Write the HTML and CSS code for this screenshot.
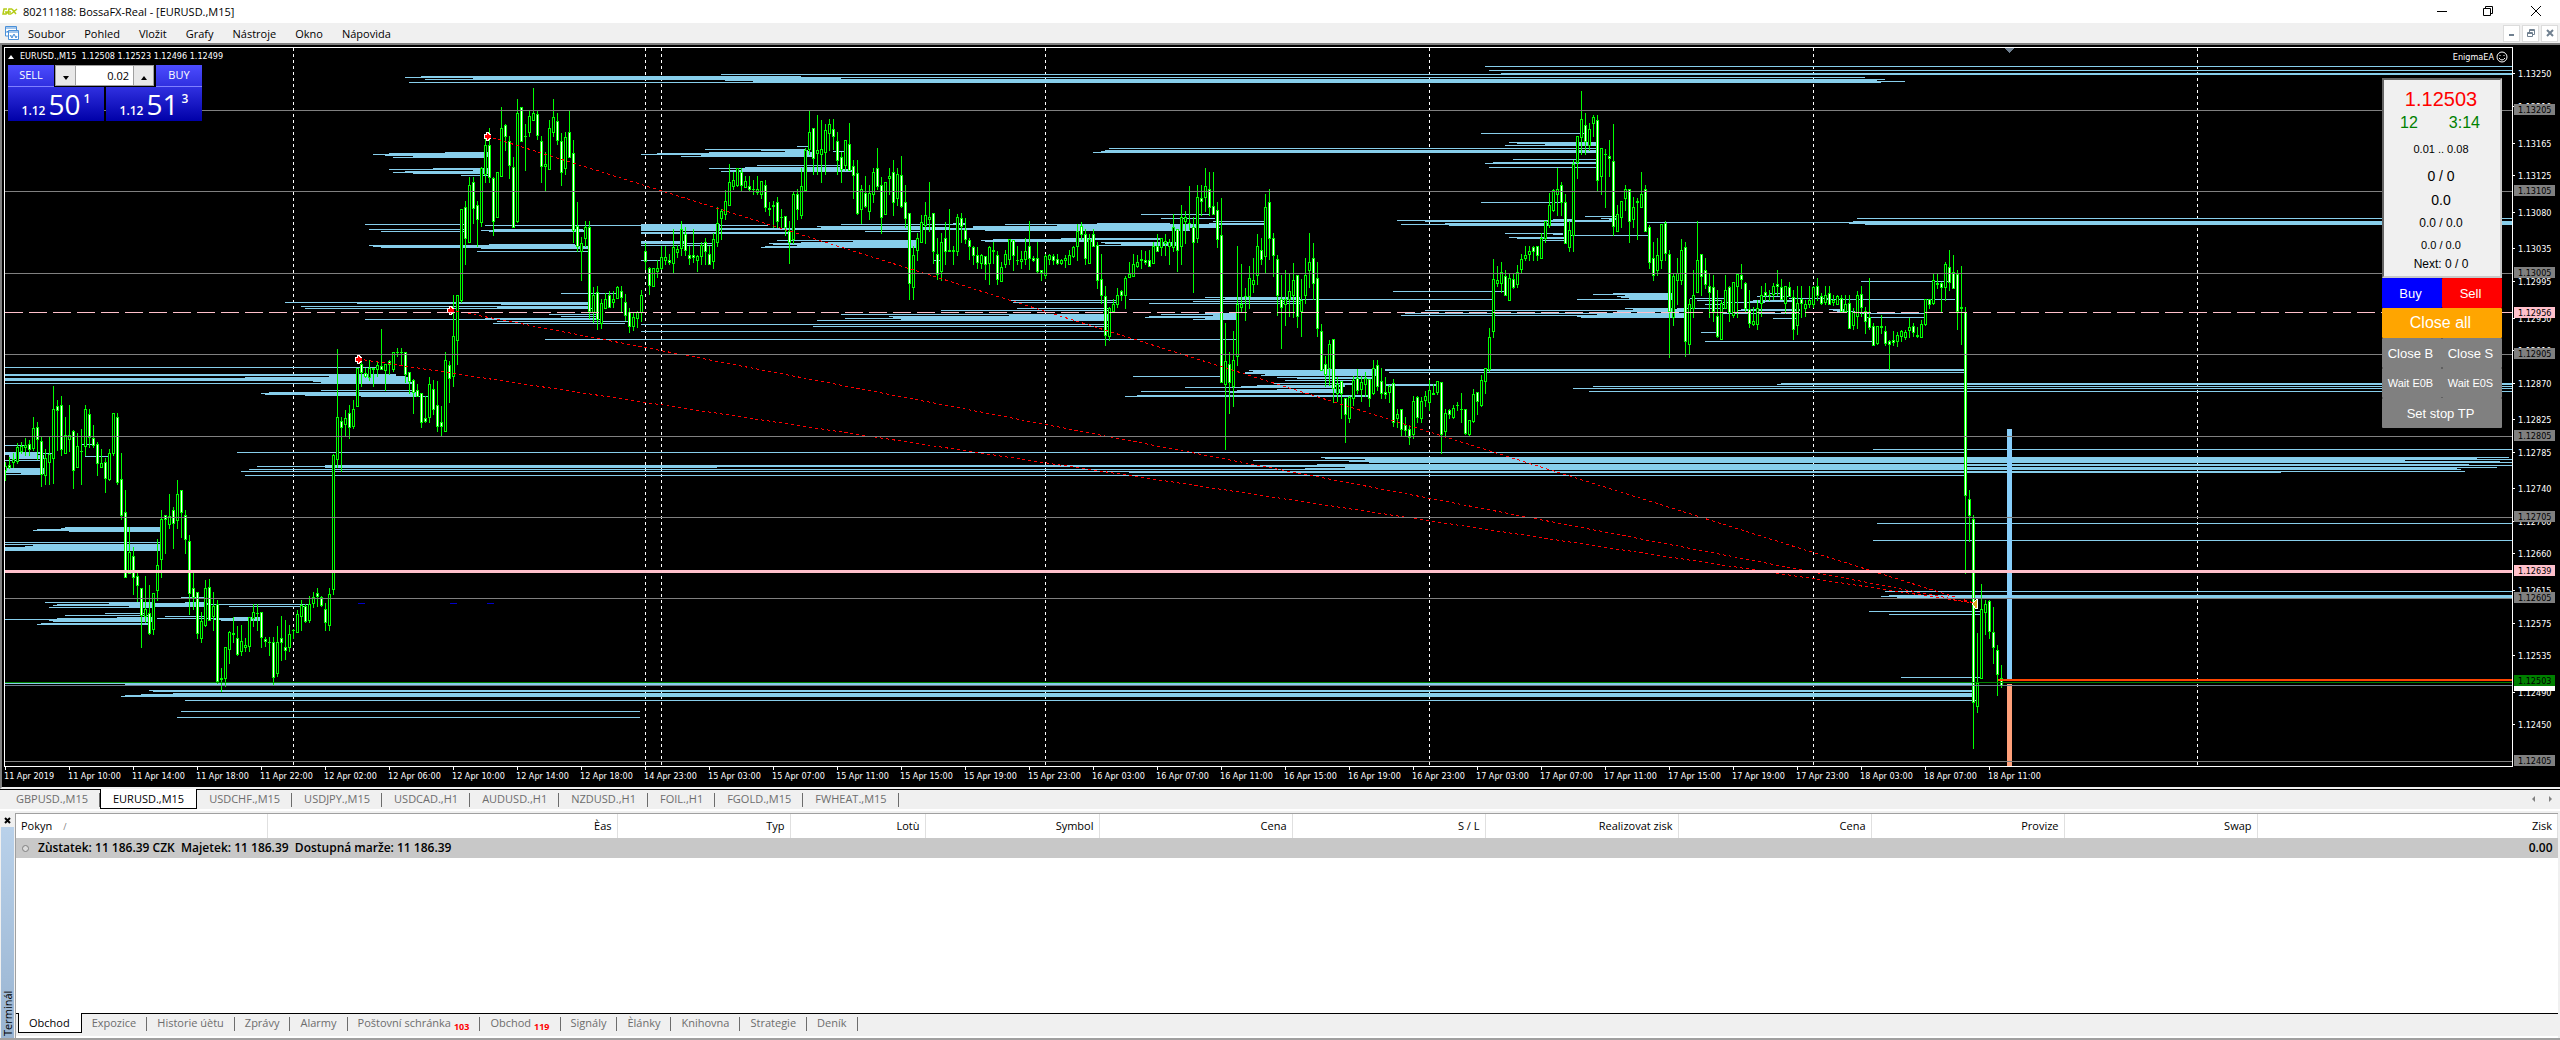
FILE: index.html
```
<!DOCTYPE html>
<html lang="cs">
  <head>
    <meta charset="UTF-8" />
    <meta name="viewport" content="width=device-width, initial-scale=1.0" />
    <title>80211188: BossaFX-Real - [EURUSD.,M15]</title>
    <link rel="stylesheet" href="styles.css">
  </head>
  <body>
    <header class="title-bar">
      <svg class="app-logo" width="16" height="10" viewBox="0 0 16 10">
        <path d="M5 2H2L1 7H4L5 5H3M6 7L7 2H10M7 5H9M6 7H9M10 2L14 7M15 2L9 7" fill="none" stroke="#b5cc18" stroke-width="1.5" />
      </svg>
      <h1>80211188: BossaFX-Real - [EURUSD.,M15]</h1>
      <div class="window-buttons">
        <button aria-label="Minimalizovat"><svg width="10" height="10"><path d="M0 5.5H10" /></svg></button>
        <button aria-label="Obnovit"><svg width="10" height="10"><path d="M0.5 2.5H7.5V9.5H0.5ZM2.5 2.5V0.5H9.5V7.5H7.5" /></svg></button>
        <button aria-label="Zavřít"><svg width="10" height="10"><path d="M0 0L10 10M10 0L0 10" /></svg></button>
      </div>
    </header>

    <nav class="menu-bar">
      <svg class="menu-logo" width="16" height="16" viewBox="0 0 16 16">
        <path d="M1.500 1.500H12.500V11H1.500ZM1 3H13M3 8V6L5 8L6 5" fill="#fff" stroke="#4a90d9" />
        <path d="M4.500 5.500H14.500V14.500H4.500ZM4 7H15M6 10L8 13L10 9L12 13L13 11" fill="#fff" stroke="#4a90d9" />
      </svg>
      <button>Soubor</button>
      <button>Pohled</button>
      <button>Vložit</button>
      <button>Grafy</button>
      <button>Nástroje</button>
      <button>Okno</button>
      <button>Nápovìda</button>
      <div class="mdi-buttons">
        <button aria-label="Minimalizovat graf"><svg width="8" height="8"><path d="M1 6H6" /></svg></button>
        <button aria-label="Obnovit graf"><svg class="thin" width="8" height="8"><path d="M0.500 3.500H5.500V7.500H0.500ZM2.500 3V0.500H7.500V5.500H6M0 4.500H5M3 1.500H7" /></svg></button>
        <button aria-label="Zavřít graf"><svg width="8" height="8"><path d="M1 1L7 7M7 1L1 7" /></svg></button>
      </div>
    </nav>

    <main class="chart-window">
      <svg id="chart" class="chart" width="100%" height="742" role="img" aria-label="EURUSD M15"></svg>

      <div class="chart-title"><i class="tri-up"></i>EURUSD.,M15&nbsp; 1.12508 1.12523 1.12496 1.12499</div>

      <div class="one-click">
        <button class="quote sell">
          <span class="side">SELL</span>
          <span class="price">1.12 <b>50</b><sup>1</sup></span>
        </button>
        <div class="lots">
          <button aria-label="Méně"><i class="tri-down"></i></button>
          <input type="text" value="0.02" aria-label="Objem" />
          <button aria-label="Více"><i class="tri-up"></i></button>
        </div>
        <button class="quote buy">
          <span class="side">BUY</span>
          <span class="price">1.12 <b>51</b><sup>3</sup></span>
        </button>
      </div>

      <div class="ea-name">EnigmaEA
        <svg width="12" height="12" viewBox="0 0 12 12"><circle cx="6" cy="6" r="5" /><path d="M4 4V5M8 4V5M3 7Q6 11 9 7" /></svg>
      </div>

      <div class="ea-panel">
        <div class="ea-info">
          <p class="rate">1.12503</p>
          <p class="timer"><span>12</span><span>3:14</span></p>
          <p class="range">0.01 .. 0.08</p>
          <p class="count">0 / 0</p>
          <p class="count">0.0</p>
          <p class="profit">0.0 / 0.0</p>
          <p class="small">0.0 / 0.0</p>
          <p class="next">Next: 0 / 0</p>
        </div>
        <button class="ea-buy">Buy</button>
        <button class="ea-sell">Sell</button>
        <button class="ea-all wide">Close all</button>
        <button>Close B</button>
        <button>Close S</button>
        <button class="ea-wait">Wait E0B</button>
        <button class="ea-wait">Wait E0S</button>
        <button class="wide">Set stop TP</button>
      </div>
    </main>

    <nav class="tabs chart-tabs">
      <button>GBPUSD.,M15</button>
      <button class="active">EURUSD.,M15</button>
      <button>USDCHF.,M15</button>
      <button>USDJPY.,M15</button>
      <button>USDCAD.,H1</button>
      <button>AUDUSD.,H1</button>
      <button>NZDUSD.,H1</button>
      <button>FOIL.,H1</button>
      <button>FGOLD.,M15</button>
      <button>FWHEAT.,M15</button>
      <div class="tab-scroll"><i class="tri-left"></i><i class="tri-right"></i></div>
    </nav>

    <section class="terminal">
      <div class="terminal-side">
        <button aria-label="Zavřít terminál"><svg width="7" height="7"><path d="M1 1L6 6M6 1L1 6" /></svg></button>
        <div class="terminal-label">Terminál</div>
      </div>
      <div class="terminal-body">
        <table class="orders">
          <colgroup>
            <col class="c-order" /><col class="c-time" /><col class="c-type" /><col class="c-lots" /><col class="c-symbol" />
            <col class="c-price" /><col class="c-price" /><col class="c-price" /><col class="c-price" /><col class="c-price" /><col class="c-price" />
            <col />
          </colgroup>
          <thead>
            <tr>
              <th>Pokyn <span class="sort">/</span></th>
              <th>Èas</th>
              <th>Typ</th>
              <th>Lotù</th>
              <th>Symbol</th>
              <th>Cena</th>
              <th>S / L</th>
              <th>Realizovat zisk</th>
              <th>Cena</th>
              <th>Provize</th>
              <th>Swap</th>
              <th>Zisk</th>
            </tr>
          </thead>
          <tbody>
            <tr>
              <td colspan="11"><i class="dot"></i>Zùstatek: 11 186.39 CZK&nbsp; Majetek: 11 186.39&nbsp; Dostupná marže: 11 186.39</td>
              <td>0.00</td>
            </tr>
          </tbody>
        </table>
        <nav class="tabs terminal-tabs">
          <button class="active">Obchod</button>
          <button>Expozice</button>
          <button>Historie úètu</button>
          <button>Zprávy</button>
          <button>Alarmy</button>
          <button>Poštovní schránka<small>103</small></button>
          <button>Obchod<small>119</small></button>
          <button>Signály</button>
          <button>Èlánky</button>
          <button>Knihovna</button>
          <button>Strategie</button>
          <button>Deník</button>
        </nav>
      </div>
    </section>

    <script src="chart.js"></script>
  </body>
</html>
```
FILE: styles.css
```
* {
  box-sizing: border-box;
}
body {
  margin: 0;
  min-height: 100vh;
  display: flex;
  flex-direction: column;
  background: #f0f0f0;
  font-family: "Open Sans", "Noto Sans", sans-serif;
  font-size: 11px;
  color: #000;
}
button {
  padding: 0;
  border: 0;
  background: none;
  font: inherit;
  color: inherit;
}
h1,
p {
  margin: 0;
  font-size: inherit;
  font-weight: normal;
}

/* window title and menu */
.title-bar {
  display: flex;
  align-items: center;
  height: 23px;
  padding-left: 2px;
  background: #fff;
}
.app-logo {
  margin-right: 5px;
}
.window-buttons {
  display: flex;
  margin-left: auto;
}
.window-buttons button {
  width: 46px;
  height: 20px;
}
.window-buttons svg {
  fill: none;
  stroke: #000;
}
.window-buttons button:last-child {
  width: 49px;
}
.menu-bar {
  display: flex;
  align-items: center;
  gap: 19px;
  height: 20px;
  padding-left: 4px;
}
.menu-logo {
  margin-right: -11px;
}
.mdi-buttons {
  display: flex;
  gap: 2px;
  margin-left: auto;
  padding-right: 2px;
}
.mdi-buttons button {
  width: 17px;
  height: 17px;
  border: 1px solid #dcdcdc;
  background: #fff;
}
.mdi-buttons svg {
  display: block;
  margin: auto;
  fill: none;
  stroke: #708090;
  stroke-width: 2;
}
.mdi-buttons .thin {
  stroke-width: 1;
}

/* chart */
.chart-window {
  position: relative;
  border-top: 2px solid #808080;
  border-bottom: 2px solid #f0f0f0;
  border-left: 2px solid #808080;
  background: #000;
}
.chart,
.chart-title,
.ea-name {
  font-family: "DejaVu Sans Condensed", "Open Sans", sans-serif;
  font-size: 9px;
}
.chart {
  display: block;
}
.chart-title,
.ea-name {
  position: absolute;
  top: 3px;
  color: #fff;
  line-height: 16px;
}
.chart-title {
  left: 6px;
}
.chart-title i {
  margin-right: 6px;
}
.ea-name {
  top: 4px;
  right: 52px;
  display: flex;
  align-items: center;
  gap: 2px;
}
.ea-name svg {
  fill: none;
  stroke: #fff;
}
.tri-up,
.tri-down,
.tri-left,
.tri-right {
  display: inline-block;
  border: 3px solid transparent;
}
.tri-up {
  border-top: 0;
  border-bottom: 4px solid currentColor;
}
.tri-down {
  border-bottom: 0;
  border-top: 4px solid currentColor;
}
.tri-left {
  border-left: 0;
  border-right: 3px solid currentColor;
}
.tri-right {
  border-right: 0;
  border-left: 3px solid currentColor;
}

.one-click {
  position: absolute;
  left: 6px;
  top: 20px;
  display: flex;
  gap: 2px;
  width: 194px;
  height: 56px;
  font-size: 12px;
}
.quote {
  display: flex;
  flex-direction: column;
  width: 96px;
  color: #fff;
}
.quote .side {
  width: 46px;
  height: 22px;
  border-bottom: 1px solid #8080ff;
  background: linear-gradient(#4c4cff, #3030e0);
  font-size: 11px;
  line-height: 20px;
}
.quote.buy .side {
  align-self: flex-end;
}
.quote .price {
  height: 34px;
  background: linear-gradient(#3030e0, #0000a8);
  font-weight: 600;
  line-height: 34px;
}
.price b {
  font-size: 28px;
  font-weight: normal;
}
.price sup {
  margin-left: 3px;
  font-size: 12px;
  line-height: 12px;
  vertical-align: 12px;
}
.lots {
  position: absolute;
  left: 47px;
  top: 0;
  display: flex;
  width: 99px;
  height: 21px;
  border: 1px solid #a0a0a0;
  background: #000;
}
.lots button {
  flex: 0 0 19px;
  background: #e8e8e8;
}
.lots input {
  width: 0;
  flex: 1;
  padding: 0 4px;
  border: 0;
  border-right: 1px solid #a0a0a0;
  border-left: 1px solid #a0a0a0;
  font: inherit;
  font-size: 11px;
  text-align: right;
}

.ea-panel {
  position: absolute;
  top: 33px;
  right: 58px;
  display: grid;
  grid-template-columns: 1fr 1fr;
  width: 120px;
  font-family: "Liberation Sans", Arial, sans-serif;
  text-align: center;
}
.ea-info {
  grid-column: 1 / 3;
  height: 200px;
  padding: 6px 2px 0 0;
  border: 2px solid #646464;
  border-right-color: #c8c8c8;
  border-bottom-color: #c8c8c8;
  background: #f0f0f0;
}
.rate {
  height: 26px;
  color: #f00;
  font-size: 20px;
  line-height: 26px;
}
.timer {
  display: flex;
  justify-content: space-between;
  height: 22px;
  padding: 0 18px 0 16px;
  color: #008000;
  font-size: 16px;
  line-height: 22px;
}
.range {
  font-size: 11px;
  line-height: 30px;
}
.count {
  font-size: 14px;
  line-height: 24px;
}
.profit {
  font-size: 12px;
  line-height: 22px;
}
.small {
  font-size: 11px;
  line-height: 22px;
}
.next {
  font-size: 12px;
  line-height: 16px;
}
.ea-panel button {
  height: 30px;
  padding-right: 3px;
  border-radius: 1px;
  background: #808080;
  color: #fff;
  font-size: 13px;
}
.ea-panel .wide {
  grid-column: 1 / 3;
}
.ea-panel .ea-buy {
  background: #00f;
}
.ea-panel .ea-sell {
  background: #f00;
}
.ea-panel .ea-all {
  background: #ffa500;
  font-size: 16px;
}
.ea-panel .ea-wait {
  font-size: 11px;
}

/* tab strips */
.tabs {
  display: flex;
  align-items: flex-start;
  border-top: 1px solid #000;
  background: #f0f0f0;
  color: #6d6d6d;
}
.tabs button {
  position: relative;
  height: 18px;
  padding: 0 12px;
  line-height: 18px;
}
.tabs button::after {
  content: "";
  position: absolute;
  top: 3px;
  right: 0;
  height: 14px;
  border-right: 1px solid #6d6d6d;
}
.tabs .active {
  height: 20px;
  margin-top: -1px;
  padding-top: 1px;
  border: 1px solid #000;
  border-top: 0;
  background: #fff;
  color: #000;
}
.tabs .active::after {
  content: none;
}
.chart-tabs {
  height: 22px;
  padding: 0 8px 0 4px;
  border-bottom: 2px solid #fff;
}
.tab-scroll {
  display: flex;
  align-items: center;
  gap: 14px;
  height: 18px;
  margin-left: auto;
  color: #808080;
}

/* terminal */
.terminal {
  flex: 1;
  display: flex;
  padding-top: 2px;
  border-bottom: 2px solid #a0a0a0;
}
.terminal-side {
  display: flex;
  flex-direction: column;
  width: 15px;
  padding: 0 1px;
}
.terminal-side button {
  height: 14px;
  line-height: 10px;
}
.terminal-side svg {
  stroke: #000;
  stroke-width: 2;
}
.terminal-label {
  flex: 1;
  padding-top: 2px;
  background: linear-gradient(#99b4d1, #b9d1ea);
  line-height: 13px;
  writing-mode: vertical-rl;
  transform: rotate(180deg);
}
.terminal-body {
  flex: 1;
  display: flex;
  flex-direction: column;
  margin-right: 2px;
  border-top: 1px solid #a0a0a0;
  border-left: 1px solid #a0a0a0;
  background: #fff;
}
.orders {
  width: 100%;
  table-layout: fixed;
  border-collapse: collapse;
}
.c-order {
  width: 251px;
}
.c-time {
  width: 350px;
}
.c-type {
  width: 173px;
}
.c-lots {
  width: 135px;
}
.c-symbol {
  width: 174px;
}
.c-price {
  width: 193px;
}
.orders th {
  height: 24px;
  padding: 0 5px 2px;
  border-right: 1px solid #e0e0e0;
  font-weight: normal;
  text-align: right;
}
.orders th:first-child {
  text-align: left;
}
.sort {
  margin-left: 8px;
  color: #808080;
  font-size: 9px;
}
.orders td {
  height: 20px;
  padding: 0 5px 0 6px;
  background: #c8c8c8;
  font-size: 12px;
  font-weight: 600;
  line-height: 16px;
}
.orders td:last-child {
  text-align: right;
}
.dot {
  display: inline-block;
  width: 7px;
  height: 7px;
  margin-right: 9px;
  border: 1px solid #808080;
  border-radius: 50%;
  background: #dcdcdc;
}
.terminal-tabs {
  height: 25px;
  margin-top: auto;
  padding-left: 2px;
  border-bottom: 2px solid #fff;
}
.terminal-tabs button {
  padding: 0 11px 0 10px;
}
.tabs small {
  margin-left: 3px;
  color: #f00;
  font-size: 9px;
  font-weight: bold;
  line-height: 9px;
  vertical-align: -3px;
}
```
FILE: chart.js
```
const SVG_NS = "http://www.w3.org/2000/svg";
const TOP = 45; // window y of the chart's first row
const LEFT = 2;
const AXIS_Y = 766;
const BAR = 4;

// one bar per entry: high, open, close, low
const bars = `
462 471 466 481,457 465 468 469,453 463 459 468,443 462 447 464,442 452 446 454,438 448 445 456,440 444 450 456,417 449 428 451,
422 427 440 460,437 441 475 487,449 476 458 485,437 463 454 485,386 459 409 484,400 406 411 451,396 405 450 456,417 454 435 454,
405 440 435 452,430 431 471 489,433 468 446 468,429 452 451 485,405 447 409 456,409 414 438 448,425 438 446 448,442 444 464 476,
449 468 463 468,458 462 479 493,449 480 453 481,413 454 413 456,413 417 483 485,453 479 516 520,490 512 578 578,527 574 552 574,
547 556 578 595,573 576 586 602,588 588 616 648,576 617 609 623,585 613 634 635,593 630 593 635,539 591 565 601,510 560 519 578,
515 515 520 554,494 525 516 529,507 510 524 549,480 521 494 529,490 490 513 538,510 515 540 554,535 541 594 615,573 588 598 610,
592 592 634 639,612 639 621 643,580 626 588 627,579 587 621 621,592 617 606 631,600 604 682 684,668 680 678 692,647 679 647 687,
631 650 632 664,617 633 635 643,626 638 655 656,625 652 641 656,638 648 645 652,617 647 617 652,604 619 612 627,604 614 613 631,
612 612 638 648,637 639 642 647,637 642 643 656,637 642 678 685,626 674 642 677,616 638 643 661,620 647 651 660,625 648 634 652,
629 631 630 639,610 633 614 633,600 617 605 631,604 606 622 623,596 621 604 623,592 604 597 608,588 593 597 607,596 597 606 607,
603 609 623 631,588 626 594 631,454 590 455 595,349 460 417 468,417 421 428 472,410 425 418 436,405 413 428 439,400 427 409 429,
368 407 368 407,360 364 373 387,368 373 377 378,360 378 368 381,368 370 368 387,361 370 365 377,329 366 370 370,364 371 364 391,
360 361 365 375,352 370 352 372,348 353 352 357,348 353 352 366,352 352 375 383,372 372 382 394,379 380 393 414,384 390 397 397,
393 393 423 428,396 418 422 423,377 418 384 423,380 389 410 415,381 405 427 432,406 422 427 436,352 432 360 432,361 365 379 403,
295 377 336 387,295 341 295 365,209 301 209 303,201 207 239 265,177 243 185 243,177 182 209 224,201 205 220 247,167 223 168 227,
139 175 145 183,128 145 178 183,177 178 222 236,172 218 172 218,107 177 128 177,124 125 137 151,136 141 166 179,157 167 228 228,
99 222 113 223,107 107 142 142,124 137 136 171,111 133 116 137,88 121 113 121,111 114 136 140,136 141 167 183,152 167 164 191,
120 170 128 170,99 133 117 137,113 121 141 145,133 141 173 186,132 169 137 175,111 132 158 158,140 153 231 243,202 226 247 252,
237 252 243 281,221 239 227 247,221 227 312 319,287 313 295 323,286 292 320 330,299 324 303 329,293 309 299 309,291 295 308 308,
291 303 299 308,286 299 287 299,286 291 298 312,294 302 316 321,308 312 327 333,312 327 317 331,311 319 312 328,290 313 295 322,
243 251 262 270,267 268 286 295,268 287 268 287,260 272 268 278,246 269 257 270,246 261 257 265,254 260 263 265,229 264 247 273,
245 253 249 258,221 249 229 256,227 234 251 256,246 255 259 265,229 255 258 263,255 261 256 272,242 257 245 265,238 242 252 265,
246 254 265 265,233 262 239 269,207 243 223 247,209 219 211 240,190 215 201 220,164 206 182 206,172 187 180 190,168 186 168 187,
168 172 186 191,176 188 181 188,176 186 190 191,180 190 189 195,176 193 189 195,181 195 181 199,180 185 208 212,202 208 210 216,
201 207 205 228,197 202 222 228,209 218 217 228,216 216 228 236,221 231 243 264,192 240 194 244,189 194 210 220,168 216 186 219,
148 191 150 191,110 150 132 155,128 128 159 175,115 154 150 175,120 155 149 183,124 153 130 175,119 134 124 151,119 129 137 150,
132 141 161 175,152 157 170 183,140 166 140 171,123 144 171 171,160 166 176 199,160 173 214 215,185 210 189 224,176 193 207 208,
185 212 193 220,168 195 172 203,148 168 187 190,177 185 218 234,182 215 182 215,168 179 176 195,160 172 203 216,168 199 174 206,
156 175 207 208,185 202 219 228,213 213 284 300,246 288 255 300,233 251 238 261,215 243 222 243,202 226 215 244,182 220 217 232,
213 213 252 264,238 254 275 280,233 272 242 281,222 238 252 265,209 250 252 252,246 250 252 265,214 252 217 256,213 218 227 243,
218 230 240 244,238 240 247 260,246 247 256 265,247 255 263 269,254 264 255 269,256 256 265 280,246 264 247 285,242 250 252 264,
251 255 280 285,262 282 267 282,250 265 254 268,239 260 239 265,240 240 256 271,246 261 260 265,251 262 259 269,238 260 251 265,
221 246 259 270,256 258 261 262,242 258 272 273,270 270 273 281,254 276 256 279,254 260 255 265,254 256 261 265,254 259 264 265,
259 264 260 265,255 261 258 268,250 265 255 265,246 257 247 258,224 247 231 261,222 226 235 240,229 234 259 265,234 264 239 264,
229 234 247 247,242 245 281 289,254 279 296 304,286 296 336 346,307 337 308 341,299 312 304 313,288 305 295 308,290 291 296 301,
276 296 278 309,262 278 274 278,254 277 264 277,255 267 262 268,250 261 259 269,251 260 263 265,250 260 267 267,242 264 246 264,
234 246 252 252,238 248 238 256,234 244 241 256,239 247 242 265,214 248 227 252,229 229 251 272,205 247 217 265,211 222 217 244,
186 224 223 230,217 227 243 293,185 239 197 243,185 198 202 216,168 198 186 212,172 189 208 216,172 206 215 215,202 210 240 248,
198 235 383 383,323 385 361 450,352 364 383 414,331 387 360 407,246 357 304 366,264 308 304 313,288 297 296 321,266 297 278 309,
258 285 280 293,234 276 246 285,238 250 260 265,194 257 207 273,189 202 239 260,233 238 256 277,255 259 296 316,275 299 308 349,
270 305 299 326,273 300 291 317,263 296 280 318,275 275 317 328,279 312 300 337,258 296 275 304,233 271 262 288,243 258 284 300,
262 278 329 337,324 331 371 371,356 364 375 387,340 369 344 386,339 339 389 403,377 394 384 402,381 381 394 419,398 398 415 443,
396 419 397 423,376 399 380 406,369 378 391 394,376 390 382 402,372 385 378 397,379 379 399 407,360 394 368 395,360 365 387 391,
368 381 394 399,377 392 395 399,385 393 386 403,379 383 423 427,409 419 414 428,409 409 430 436,417 425 431 436,425 429 438 445,
396 435 401 439,396 397 418 423,397 419 401 423,391 401 396 407,380 403 390 411,384 395 393 395,381 393 381 395,382 382 435 454,
409 432 413 436,409 410 415 419,405 418 408 419,402 406 405 411,393 410 409 423,409 409 434 435,420 435 420 436,389 422 394 423,
392 392 402 415,375 406 380 407,368 382 368 394,328 370 337 372,259 332 279 338,266 284 280 287,262 284 272 293,270 276 296 296,
273 301 278 301,274 279 288 289,265 285 272 288,254 270 259 273,246 259 255 261,246 255 251 261,246 247 252 261,246 246 256 261,
233 259 238 259,221 239 221 243,193 226 205 228,189 211 190 212,168 195 189 216,182 185 203 216,194 202 244 244,221 248 230 252,
160 236 164 252,136 163 136 179,91 138 119 155,113 125 142 155,123 146 129 151,115 124 117 137,115 120 181 191,148 177 148 195,
149 155 154 208,140 156 159 177,124 161 227 236,205 232 214 232,201 218 201 228,185 199 189 211,189 189 222 243,197 220 207 228,
198 201 203 240,172 208 194 208,185 189 232 232,225 227 263 269,242 258 276 281,238 271 255 276,224 261 224 269,221 223 254 261,
250 254 312 358,273 318 276 326,258 281 273 305,239 281 250 285,242 247 342 357,299 345 304 354,270 309 295 318,221 293 260 293,
254 254 277 296,258 270 285 289,273 286 293 318,275 287 312 322,290 316 337 338,300 340 303 340,275 309 290 309,286 287 313 322,
282 316 282 318,274 287 274 318,264 275 280 289,282 283 309 312,290 309 324 328,307 325 321 326,300 325 308 330,286 304 295 317,
283 292 296 301,290 296 295 301,283 295 286 300,270 284 287 296,279 287 300 300,286 304 286 314,282 287 297 297,290 297 330 340,
286 326 303 335,286 299 304 318,300 309 304 317,286 305 300 308,286 305 287 308,278 286 296 301,293 296 304 305,286 303 295 305,
286 293 305 305,295 303 300 306,295 305 296 305,295 298 312 312,295 312 304 312,295 303 329 329,308 326 312 330,291 317 295 329,
286 294 308 317,307 311 322 334,278 317 328 330,323 326 346 346,326 344 326 345,315 328 326 334,326 331 344 346,340 341 345 370,
331 340 343 346,332 342 335 347,330 337 331 342,330 338 332 340,318 331 327 338,323 326 333 337,327 335 337 338,320 338 324 338,
299 325 299 326,299 299 305 309,274 304 280 305,274 285 283 289,282 283 288 312,262 288 264 301,250 267 283 291,255 272 289 289,
270 274 312 330,266 309 307 345,307 312 496 574,490 499 516 542,515 519 703 749,633 707 683 713,584 679 609 679,600 613 604 635,
600 601 632 639,607 632 648 664,645 650 675 696,665 678 686 688`;

// volume levels: x from, x to, y, thickness
const levels = `
5 377 367 1,5 396 374 2,329 405 376 1,245 408 377 1,5 409 378 3,313 411 381 1,321 412 382 1,5 413 383 1,321 413 390 1,269 416 392 1,
261 417 393 1,265 418 394 1,305 418 395 1,361 428 396 1,237 1965 452 1,325 1965 465 2,257 325 466 1,325 717 467 1,249 1965 469 1,
241 1965 471 1,245 1966 475 1,1129 1965 472 1,1253 2405 460 1,1321 2509 457 1,1325 2477 458 1,1365 2512 459 1,1349 2500 461 1,
1369 2512 462 1,1317 2469 464 1,1965 2512 465 1,1345 2497 467 1,1305 2457 468 1,1965 2461 469 1,1965 2465 471 1,1965 2281 472 1,
5 27 445 1,5 42 452 1,5 52 453 1,5 37 454 1,9 44 455 4,5 42 460 1,5 44 468 5,21 44 473 1,5 43 474 1,85 108 456 1,82 93 444 1,
65 161 527 1,61 161 528 1,37 161 529 1,33 161 530 1,69 161 531 1,5 161 542 1,5 161 544 1,33 161 545 1,25 161 546 1,5 161 547 4,
181 204 597 1,45 155 602 1,109 155 603 1,57 155 604 1,53 155 605 1,129 155 606 1,49 155 607 1,185 205 602 1,155 208 603 2,155 205 605 2,
205 309 604 1,229 305 606 1,105 145 613 1,65 150 615 1,117 152 617 1,57 153 618 1,5 153 619 1,49 153 620 1,53 153 621 1,41 150 623 1,
37 150 624 1,165 207 616 1,157 262 618 1,233 262 617 1,213 262 619 1,221 262 620 1,5 1972 683 1,125 1972 684 1,149 1974 690 1,
153 1974 691 1,173 1974 693 1,141 1974 694 1,125 1974 695 1,121 1972 696 1,185 1976 700 1,181 640 711 1,177 640 717 1,
421 801 76 1,405 1865 77 1,473 841 78 1,425 1885 79 1,725 1877 80 1,753 1905 81 1,409 1881 82 1,721 2512 74 1,1501 2512 73 1,
1485 2512 66 1,1489 2512 70 1,445 490 152 1,389 490 153 1,373 490 154 1,385 490 155 1,413 490 156 1,393 487 157 1,
433 489 168 1,389 489 169 1,473 489 170 1,405 489 171 1,393 489 172 1,413 490 173 1,461 490 175 1,365 464 224 1,369 464 229 1,
381 466 231 1,485 768 225 1,493 583 229 1,481 584 230 1,489 584 231 1,489 575 244 1,369 577 245 1,373 589 246 1,381 589 247 1,
481 589 248 1,477 589 251 1,561 617 293 1,285 588 302 1,357 590 303 1,501 590 304 1,301 590 306 1,497 590 307 1,305 592 308 1,
549 596 314 1,561 598 316 1,485 598 318 1,365 600 319 1,497 628 321 1,493 625 323 1,545 1236 339 1,
797 810 146 1,705 805 149 1,761 808 150 1,785 810 151 1,709 812 152 1,657 812 153 1,641 812 154 1,701 815 155 1,681 815 156 1,
833 846 151 1,757 840 165 1,745 840 167 1,709 842 168 1,741 850 169 1,729 852 170 1,721 852 171 1,641 720 224 4,641 980 228 2,
641 720 230 1,641 788 232 2,841 965 224 1,817 920 226 1,821 950 227 1,825 1190 229 1,865 920 231 1,973 1220 227 1,947 1190 228 1,
985 1190 230 1,1005 1267 224 1,1057 1216 225 1,973 1216 226 1,1097 1170 223 1,953 965 223 1,641 687 241 3,641 712 245 1,675 712 243 1,
777 917 240 1,853 917 241 1,801 917 242 1,769 917 243 1,773 917 244 1,797 918 245 1,765 918 246 1,761 918 247 1,641 662 260 1,
933 941 260 1,993 1161 239 1,981 1095 240 1,985 1095 241 1,1061 1160 238 1,1101 1178 242 1,1105 1178 243 1,1121 1178 244 1,
1097 1178 245 1,1141 1210 214 1,1161 1215 218 1,1213 1264 221 1,1209 1267 223 1,1009 1117 300 1,1013 1117 302 1,1017 1109 308 1,
941 1109 310 1,841 1108 314 1,1009 1108 315 1,889 1108 316 1,893 1108 317 1,845 1108 318 1,901 1108 319 1,817 1108 320 1,
641 1108 324 1,813 1108 326 1,641 1109 331 1,1109 1597 148 1,1105 1597 150 1,1101 1597 151 1,1093 1597 152 1,1205 1300 297 1,
1225 1300 298 1,1129 1492 299 1,1193 1300 301 1,1149 1300 303 1,1205 1238 313 1,1161 1238 314 1,1213 1238 315 1,1149 1238 316 1,
1145 1237 317 1,1205 1237 318 1,1193 1237 319 1,1133 1221 376 1,1249 1376 370 1,1320 1376 369 1,1253 1376 371 1,1245 1376 372 1,
1243 1376 373 1,1265 1376 374 1,1261 1376 375 1,1277 1375 377 1,1297 1375 378 1,1285 1352 380 1,1273 1352 383 1,1340 1352 384 1,
1257 1345 385 1,1241 1345 386 1,1185 1335 387 1,1277 1340 389 1,1237 1340 390 1,1141 1340 391 1,1230 1342 392 1,1137 1368 395 1,
1125 1368 396 1,1385 1965 369 2,1389 1965 372 1,1385 1436 384 2,1481 1584 133 1,1509 1597 142 1,1517 1597 143 1,1545 1597 144 1,
1505 1597 145 1,1513 1597 159 1,1493 1597 162 1,1485 1599 163 1,1489 1598 167 1,1481 1563 202 1,1397 1612 220 1,1553 1573 219 1,
1425 1612 221 1,1445 1565 223 1,1401 1565 224 1,1449 1565 225 1,1585 1616 216 1,1601 1616 218 1,1609 1616 219 1,1857 2512 218 1,
1853 2512 221 1,1647 2512 222 1,1849 2512 223 1,1865 2512 224 1,1571 1649 235 1,1505 1563 233 1,1553 1563 234 1,1509 1566 237 1,
1517 1566 238 1,1542 1565 240 1,1393 1504 291 1,1613 1672 293 1,1593 1672 294 1,1625 1672 295 1,1617 1672 296 1,1621 1672 297 1,
1629 1672 298 1,1577 1672 299 1,1690 1725 298 1,1697 1722 300 1,1723 1765 302 1,1770 1780 293 1,1757 1790 296 1,1753 1793 300 1,
1749 1793 301 1,1789 1830 298 1,1861 1948 281 1,1827 1955 299 1,1705 1725 304 1,1625 1672 308 1,1633 1685 309 1,1425 1685 310 1,
1617 1685 311 1,1405 1685 313 1,1597 1685 314 1,1401 1685 315 1,1577 1685 316 1,1581 1685 317 1,1677 1725 308 1,1681 1685 309 1,
1741 1800 309 1,1737 1800 310 1,1720 1800 313 1,1773 1797 318 1,1701 1718 332 1,1705 1875 341 1,1829 1845 309 1,1833 1845 310 1,
1837 1855 311 1,1860 1924 313 1,1867 1924 317 1,1781 2512 383 1,1777 2512 384 1,1593 2512 386 1,1573 2512 388 1,1589 2512 391 1,
1873 2512 449 1,1877 2512 523 1,1873 2512 540 1,1885 2512 591 1,1889 2512 595 1,1881 2512 596 1,1897 2512 597 1,1869 1981 611 1,
1889 1981 614 1,1901 1981 677 1`;

const dayBreaks = [293, 645, 661, 1045, 1429, 1813, 2197];
const trades = [[487, 136], [450, 310], [358, 359]];
const exitPoint = [1974, 603];

const axisPrices = [113250, 113210, 113165, 113125, 113080, 113035, 112995, 112950, 112910, 112870,
  112825, 112785, 112740, 112700, 112660, 112615, 112575, 112535, 112490, 112450];
const gridPrices = [113205, 113105, 113005, 112905, 112805, 112705, 112605, 112405];

const chart = document.getElementById("chart");
const root = add("g", { transform: `translate(${-LEFT} ${-TOP})` }, chart);

function add(name, attrs, parent) {
  const el = document.createElementNS(SVG_NS, name);
  for (const key in attrs) el.setAttribute(key, attrs[key]);
  (parent || root).appendChild(el);
  return el;
}

function rect(x, y, width, height, fill) {
  return add("rect", { x, y, width, height, fill });
}

function text(x, y, value, fill) {
  add("text", { x, y, fill }).textContent = value;
}

function priceY(price) {
  return Math.round(110 + (113205 - price) * 0.81375);
}

function box(x, y, w, h) {
  return `M${x} ${y}h${w}v${h}h${-w}z`;
}

function parse(data) {
  return data.trim().split(",").map((row) => row.trim().split(" ").map(Number));
}

function drawBackground(right) {
  dayBreaks.forEach((x) => {
    add("path", { d: `M${x + 0.5} 48V765`, stroke: "#fff", "stroke-dasharray": "3 3" });
  });
  const d = parse(levels).map(([x1, x2, y, h]) => box(x1, y, (x2 === 2512 ? right : x2) - x1, h));
  add("path", { d: d.join(""), fill: "#87ceeb" });
}

function drawBars() {
  let outline = "";
  let up = "";
  let down = "";
  parse(bars).forEach(([high, open, close, low], i) => {
    const x = 5 + i * BAR;
    const top = Math.min(open, close);
    const height = Math.max(1, Math.abs(close - open));
    outline += box(x, high, 1, low - high) + box(x - 1, top, 3, height);
    if (height > 2) {
      const inner = box(x, top + 1, 1, height - 2);
      if (close > open) down += inner;
      else up += inner;
    }
  });
  add("path", { d: outline, fill: "#0f0" });
  add("path", { d: up, fill: "#000" });
  add("path", { d: down, fill: "#fff" });
}

function drawTrades() {
  trades.forEach(([x, y]) => {
    add("path", { d: `M${x} ${y}L${exitPoint}`, stroke: "#f00", "stroke-dasharray": "3 3" });
    // entry arrow: white edge under a red head and tail
    add("path", { d: box(x - 3, y - 2, 4, 5) + box(x - 1, y - 4, 3, 9) + box(x + 2, y - 3, 1, 7) + box(x + 3, y - 2, 1, 5), fill: "#fff" });
    add("path", { d: box(x - 2, y - 1, 6, 3) + box(x, y - 3, 1, 7) + box(x + 1, y - 2, 1, 5), fill: "#f00" });
    rect(x, 603, 7, 1, "#0000c8");
  });
  add("path", { d: "M1977 599V608H1975L1972 604Z", fill: "#daa520", stroke: "#fff" });
}

function drawLines(right) {
  const width = right - 5;
  rect(2007, 429, 5, 250, "#87cefa");
  rect(2007, 684, 5, 82, "#ffa07a");
  add("path", { d: `M5 312.500H${right}`, stroke: "#ffc0cb", "stroke-dasharray": "18 6" });
  gridPrices.forEach((p) => rect(5, priceY(p), width, 1, "#808080"));
  rect(5, 570, width, 3, "#ffc0cb");
  rect(1998, 679, right - 1998, 2, "#ff4500");
  rect(5, 682, width, 1, "#008000");
  rect(5, 685, width, 1, "#708090");
  add("path", { d: "M2005 48H2014L2009.500 53Z", fill: "#708090" });
}

function drawAxes(right) {
  add("path", { d: `M4.500 ${AXIS_Y}V47.500H${right + 0.5}V${AXIS_Y + 0.5}H4`, fill: "none", stroke: "#fff" });

  const labels = ["11 Apr 2019"];
  [["11", 10, 22], ["12", 2, 18], ["14", 23, 23], ["15", 3, 23], ["16", 3, 23], ["17", 3, 23], ["18", 3, 11]].forEach(([day, from, to]) => {
    for (let h = from; h <= to; h += 4) labels.push(`${day} Apr ${String(h).padStart(2, "0")}:00`);
  });
  labels.forEach((label, i) => {
    rect(5 + i * 64, AXIS_Y, 1, 4, "#fff");
    text(4 + i * 64, 779, label, "#fff");
  });

  axisPrices.forEach((p) => {
    rect(right, priceY(p), 3, 1, "#fff");
    text(right + 6, priceY(p) + 4, (p / 100000).toFixed(5), "#fff");
  });
  rect(right + 2, 679, 41, 12, "#fff");
  gridPrices.forEach((p) => tag(p, "#808080"));
  tag(112956, "#ffc0cb");
  tag(112639, "#ffc0cb");
  tag(112503, "#008000");

  function tag(p, color) {
    rect(right + 2, priceY(p) - 6, 41, 11, color);
    text(right + 6, priceY(p) + 3, (p / 100000).toFixed(5), "#000");
  }
}

function draw() {
  root.innerHTML = "";
  root.setAttribute("shape-rendering", "crispEdges");
  const right = chart.clientWidth + LEFT - 48;
  drawBackground(right);
  drawBars();
  drawTrades();
  drawLines(right);
  drawAxes(right);
}

window.addEventListener("resize", draw);
draw();
```
